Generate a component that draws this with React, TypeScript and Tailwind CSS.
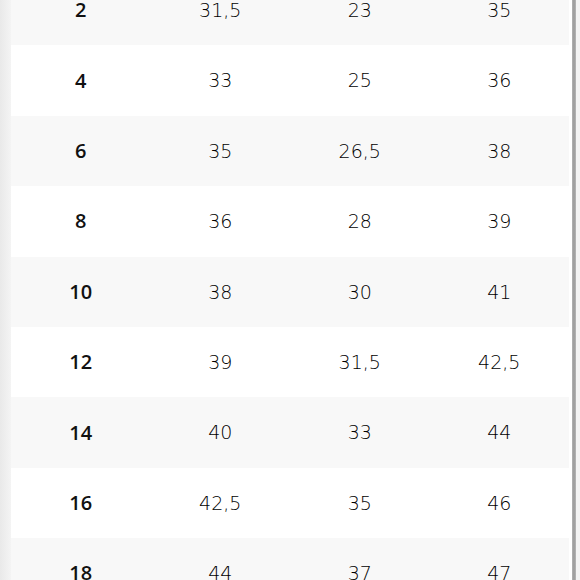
import React from 'react';

const rows: [string, string, string, string][] = [
  ['2', '31,5', '23', '35'],
  ['4', '33', '25', '36'],
  ['6', '35', '26,5', '38'],
  ['8', '36', '28', '39'],
  ['10', '38', '30', '41'],
  ['12', '39', '31,5', '42,5'],
  ['14', '40', '33', '44'],
  ['16', '42,5', '35', '46'],
  ['18', '44', '37', '47'],
];

const App: React.FC = () => {
  return (
    <div className="w-[580px] h-[580px] overflow-hidden bg-white flex font-['DejaVu_Sans',sans-serif]">
      <div className="w-[11px] h-full bg-gradient-to-r from-[#e9e9e9] to-[#f4f4f4]" />
      <div className="flex-1 -mt-[25px] text-black">
        {rows.map((row, i) => (
          <div key={row[0]} className={`grid grid-cols-4 h-[70.4px] items-center text-center text-[19px] ${i % 2 === 0 ? 'bg-[#f8f8f8]' : 'bg-white'}`}>
            <span className="font-['Open_Sans',sans-serif] font-semibold text-[20px] text-[#111]">{row[0]}</span>
            <span className="font-light">{row[1]}</span>
            <span className="font-light">{row[2]}</span>
            <span className="font-light">{row[3]}</span>
          </div>
        ))}
      </div>
      <div className="w-[3px] h-full bg-white" />
      <div className="w-[4px] h-full bg-gradient-to-r from-[#b4b4b4] via-[#999999] to-[#b8b8b8]" />
      <div className="w-[4px] h-full bg-[#f3f3f3]" />
    </div>
  );
};

export default App;
